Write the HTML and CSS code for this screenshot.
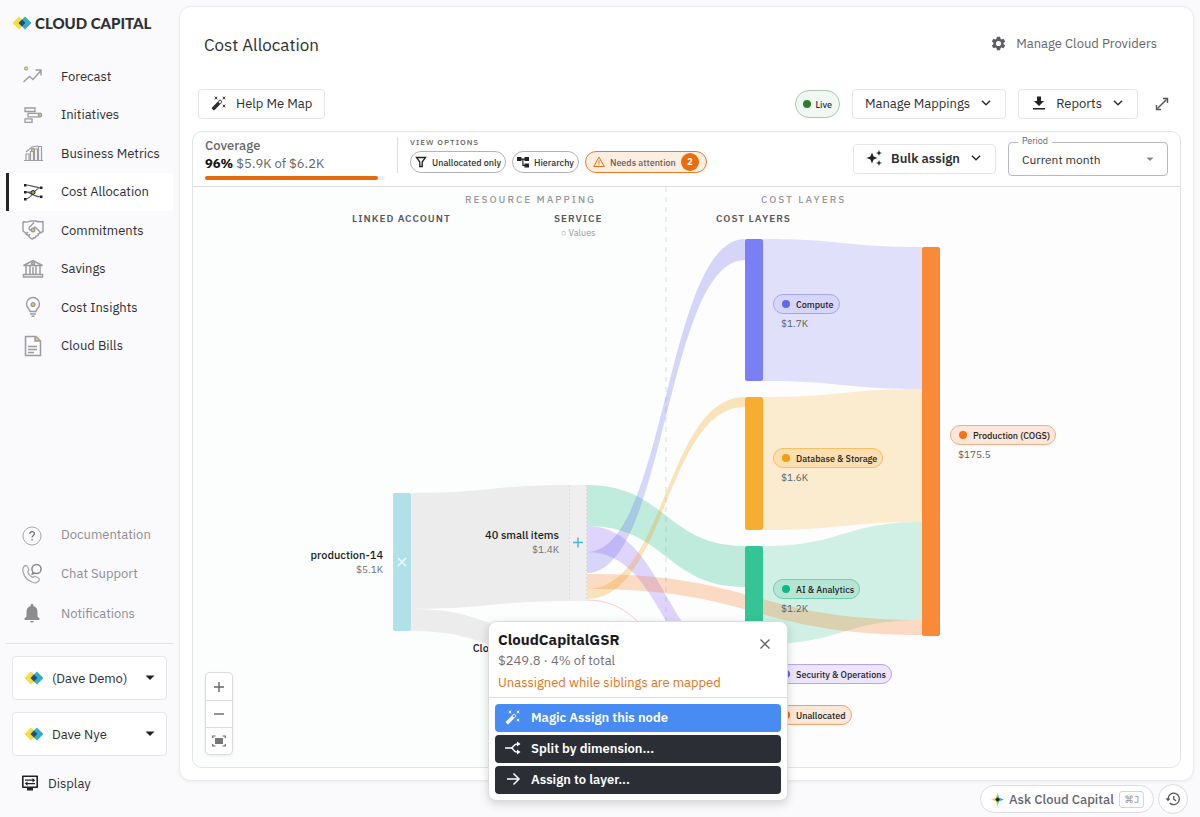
FILE: index.html
```
<!DOCTYPE html>
<html lang="en">
<head>
    <meta charset="UTF-8">
    <meta name="viewport" content="width=device-width, initial-scale=1.0">
    <title>Cost Allocation - Cloud Capital</title>
    <link rel="stylesheet" href="styles.css">
</head>
<body>
    <!-- shared shapes -->
    <svg class="defs" width="0" height="0" aria-hidden="true">
        <symbol id="logo" viewBox="0 0 20 14">
            <path d="M7 .5 13.500 7 7 13.500.5 7z" fill="#fbdc3a"/>
            <path d="M13 .5 19.500 7 13 13.500 6.500 7z" fill="#35adc6"/>
            <path d="M10 3.600 13.400 7 10 10.400 6.600 7z" fill="#1f4e79"/>
        </symbol>
        <symbol id="wand" viewBox="0 0 24 24">
            <path d="m7.500 5.600 2.500 1.400-1.400-2.500L10 2 7.500 3.400 5 2l1.400 2.500L5 7zm12 9.800L17 14l1.400 2.500L17 19l2.500-1.400L22 19l-1.400-2.500L22 14zM22 2l-2.500 1.400L17 2l1.400 2.500L17 7l2.500-1.400L22 7l-1.400-2.500zm-7.630 5.290a1 1 0 0 0-1.410 0L1.290 18.960a1 1 0 0 0 0 1.410l2.340 2.340c.39.39 1.020.39 1.410 0L16.700 11.050a1 1 0 0 0 0-1.410zm-1.030 5.490-2.120-2.120 2.440-2.440 2.120 2.120z" fill="currentColor"/>
        </symbol>
        <symbol id="chevron" viewBox="0 0 12 12">
            <path d="m2.500 4 3.500 3.500L9.500 4" fill="none" stroke="currentColor" stroke-width="1.300"/>
        </symbol>
    </svg>

    <aside class="sidebar">
        <a class="brand" href="#"><svg class="brand-logo"><use href="#logo"/></svg>CLOUD CAPITAL</a>

        <nav class="nav">
            <a href="#"><svg viewBox="0 0 22 22"><path d="m1.500 17 6-5.500 3.500 3L19 5.500M13.500 5H19v5.500" fill="none" stroke="#9b9ba0" stroke-width="1.400"/><circle cx="4" cy="3.500" r="1.600" fill="#e6d870" stroke="#9b9ba0"/></svg>Forecast</a>
            <a href="#"><svg viewBox="0 0 22 22" fill="none" stroke="#9b9ba0" stroke-width="1.300"><path d="M3 4h10v3.500H3zM6 9.300h12v3.500H6zM3 14.800h7v3.500H3z"/><circle cx="18" cy="11" r="1.700" fill="#d8ca55"/></svg>Initiatives</a>
            <a href="#"><svg viewBox="0 0 22 22" fill="none" stroke="#9b9ba0" stroke-width="1.200"><path d="M2 18.500h19M4 18v-6h3v6M8.500 18V9.500h3V18M12.500 18V7h3v11M16.500 18V4.500h3V18M4 10l6-5 6-1"/><circle cx="11" cy="8" r="1.600" fill="#e9cb45"/></svg>Business Metrics</a>
            <a href="#" class="active"><svg viewBox="0 0 22 22"><path d="M3 4c5 0 9 2 16 3M3 11c6 0 9 5 16 5M3 18c8 0 8-11 16-11M3 11c4 0 6 0 8 0" fill="none" stroke="#555" stroke-width="1.200"/><path d="M2 3h2.500v2.500H2zM2 10h2.500v2.500H2zM2 17h2.500v2.500H2zM18 5.500h2.500V8H18zM18 14.500h2.500V17H18z" fill="#222"/><circle cx="11" cy="11.500" r="2" fill="#a8a43a" stroke="#222"/></svg>Cost Allocation</a>
            <a href="#"><svg viewBox="0 0 22 22" fill="none" stroke="#9b9ba0" stroke-width="1.400" stroke-linejoin="round"><path d="M1 2.500c3 1 5 .8 7-.5h6c2 1 4 1 7 .5v10l-3 1.500M1 2.500V12l2 1.500 6 6c1 1 2.500.5 2.500-.8 1.500.8 2.800-.3 2.500-1.700 1.700.5 2.800-.8 2.200-2.200 1.600 0 2.200-1.500 1.200-2.500L13 8l-3 2.500c-2 1.200-3.800-.6-2.500-2.300L12 3.500M6 13l-2.500 2.500M8 15l-2 2.500"/><circle cx="11" cy="11" r="1.800" fill="#e9cb45"/></svg>Commitments</a>
            <a href="#"><svg viewBox="0 0 22 22" fill="none" stroke="#9b9ba0" stroke-width="1.500"><path d="M1.500 7.500 11 2.500l9.500 5zM4 8v8M8 8v8M14 8v8M18 8v8M11 9v7M1.500 16.500h19V19h-19z"/><circle cx="11" cy="5.500" r="1.500" fill="#e9cb45"/></svg>Savings</a>
            <a href="#"><svg viewBox="0 0 22 22" fill="none" stroke="#9b9ba0" stroke-width="1.400"><path d="M8 15.500c0-2-3.500-3.500-3.500-7.500a6.500 6.500 0 0 1 13 0c0 4-3.500 5.500-3.500 7.500zM8 18h6M9.500 20.300h3"/><circle cx="11" cy="8.500" r="1.900" fill="#e9cb45"/></svg>Cost Insights</a>
            <a href="#"><svg viewBox="0 0 22 22" fill="none" stroke="#9b9ba0" stroke-width="1.500"><path d="M3.500 1.500H14l4.500 4.500v14.500h-15zM6 11.500h9M6 14.500h9M6 17.500h6"/><path d="M13 1.500V6h5" fill="#e9cb45"/></svg>Cloud Bills</a>
        </nav>

        <nav class="nav nav-help">
            <a href="#"><svg viewBox="0 0 22 22" fill="none"><circle cx="10" cy="12" r="9" stroke="#a5a5aa"/><path d="M7.800 9.800c0-3 4.600-2.800 4.600-.2 0 1.800-2.300 1.900-2.300 4M10.100 15v1.500" stroke="#77777c" stroke-width="1.300"/></svg>Documentation</a>
            <a href="#"><svg viewBox="0 0 22 22" fill="none" stroke="#aaaaaf" stroke-width="1.300"><path d="M2 3.500c1.500-1.700 3-1 3.700.5l1 2.300c.4 1-.6 1.900-1 2.600.8 2.500 2.500 4.400 4.900 5.500.8-.6 1.600-1.500 2.800-.9l3 1.500c1.300.8 1.300 2-.2 3.500-1.500 1.400-3.200 1.700-5.200 1C5.500 17.500 2 13.500.9 8.500.6 6.500.8 5 2 3.500z"/><circle cx="14.500" cy="6" r="4.600" stroke="#88888d" stroke-width="1.500"/><path d="m11 9-.8 2.200 2.500-.8" stroke="#88888d"/></svg>Chat Support</a>
            <a href="#"><svg viewBox="0 0 22 22"><path d="M10 20.500a2 2 0 0 0 2-1.500H8a2 2 0 0 0 2 1.500zm5.500-6V10c0-3-1.500-5.200-4.200-5.900V3a1.300 1.300 0 0 0-2.600 0v1.100C6 4.800 4.500 7 4.500 10v4.500L2.500 16.500V18h15v-1.500z" fill="#8c8c90"/></svg>Notifications</a>
        </nav>

        <div class="accounts">
            <label class="account">
                <svg class="account-logo"><use href="#logo"/></svg>
                <select aria-label="Organization"><option>(Dave Demo)</option></select>
                <svg class="caret" viewBox="0 0 10 6"><path d="M.5.5h9L5 5z"/></svg>
            </label>
            <label class="account">
                <svg class="account-logo"><use href="#logo"/></svg>
                <select aria-label="User"><option>Dave Nye</option></select>
                <svg class="caret" viewBox="0 0 10 6"><path d="M.5.5h9L5 5z"/></svg>
            </label>
        </div>

        <button class="display-button">
            <svg viewBox="0 0 18 18"><path d="M1.800 2.300h14.400v11H1.800z" fill="none" stroke="#222" stroke-width="1.600" stroke-linejoin="round"/><path d="M6 14h6v2.500H6z" fill="#222"/><path d="M4 6.200h8M6 9.600h8" stroke="#222" stroke-width="1.200"/><path d="m11.500 4 2.700 2.200-2.700 2.200zM6.500 7.400 3.800 9.600l2.700 2.200z" fill="#222"/></svg>
            Display
        </button>
    </aside>

    <div class="page">
        <main class="card">
            <header class="page-header">
                <h1>Cost Allocation</h1>
                <a class="providers" href="#">
                    <svg viewBox="0 0 24 24"><path d="M19.140 12.940c.04-.3.060-.61.060-.94s-.02-.64-.07-.94l2.030-1.580a.49.49 0 0 0 .12-.61l-1.920-3.320a.49.49 0 0 0-.59-.22l-2.390.96a7 7 0 0 0-1.620-.94l-.36-2.540a.48.48 0 0 0-.48-.41h-3.840a.48.48 0 0 0-.47.41l-.36 2.540a7 7 0 0 0-1.620.94l-2.390-.96a.48.48 0 0 0-.59.22L2.740 8.870a.47.47 0 0 0 .12.61l2.030 1.580a6 6 0 0 0 0 1.880l-2.030 1.580a.49.49 0 0 0-.12.61l1.920 3.320c.12.22.37.29.59.22l2.390-.96c.5.38 1.030.7 1.620.94l.36 2.540c.05.24.24.41.48.41h3.840c.24 0 .44-.17.47-.41l.36-2.540a7 7 0 0 0 1.620-.94l2.390.96c.22.08.47 0 .59-.22l1.920-3.320a.47.47 0 0 0-.12-.61zM12 15.600a3.600 3.600 0 1 1 0-7.200 3.600 3.600 0 0 1 0 7.200z" fill="#5f5f63"/></svg>
                    Manage Cloud Providers
                </a>
            </header>

            <div class="toolbar">
                <button class="button"><svg class="icon"><use href="#wand"/></svg>Help Me Map</button>
                <span class="live"><i></i>Live</span>
                <button class="button">Manage Mappings<svg class="chevron"><use href="#chevron"/></svg></button>
                <button class="button"><svg class="icon" viewBox="0 0 16 16"><path d="M6 1.500h4V6h3l-5 5-5-5h3zM2 13h12v1.600H2z" fill="#222"/></svg>Reports<svg class="chevron"><use href="#chevron"/></svg></button>
                <button class="expand" aria-label="Full screen"><svg viewBox="0 0 14 14"><path d="M2.500 11.500 11.500 2.500" stroke="#555" stroke-width="1.400"/><path d="M8 1.500h4.500V6M1.500 8v4.500H6" fill="none" stroke="#555" stroke-width="1.400"/></svg></button>
            </div>

            <section class="panel">
                <div class="panel-header">
                    <div class="coverage">
                        <h2>Coverage</h2>
                        <p><strong>96%</strong> $5.9K of $6.2K</p>
                        <div class="bar"><div class="bar-fill" style="width: 96%"></div></div>
                    </div>
                    <div class="view-options">
                        <h3>VIEW OPTIONS</h3>
                        <div class="chips">
                            <button class="chip"><svg viewBox="0 0 12 12"><path d="M1.500 1.500h9L7.200 6v4.500H4.800V6z" fill="none" stroke="#222" stroke-width="1.300"/></svg>Unallocated only</button>
                            <button class="chip"><svg viewBox="0 0 12 12"><path d="M0 1h4.500v4H0zM7.500 1H12v4H7.500zM7.500 7.500H12v4H7.500zM4 2.500h4v1.200H6.500v5H8V10H5.300V3.700H4z" fill="#222"/></svg>Hierarchy</button>
                            <button class="chip chip-warning"><svg viewBox="0 0 12 12"><path d="M6 1.200 11.300 10.500H.7zM6 4.500v3M6 8.200v1" fill="none" stroke="#ea6c0a"/></svg>Needs attention<b>2</b></button>
                        </div>
                    </div>
                    <button class="button bulk"><svg class="icon" viewBox="0 0 16 16"><path d="M6 2.500 7.600 6.400 11.500 8 7.600 9.600 6 13.500 4.400 9.600.5 8l3.900-1.600zM13 0l.8 2.200L16 3l-2.200.8L13 6l-.8-2.200L10 3l2.200-.8zM13 10l.8 2.200 2.200.8-2.200.8L13 16l-.8-2.200L10 13l2.200-.8z" fill="#222"/></svg>Bulk assign<svg class="chevron"><use href="#chevron"/></svg></button>
                    <div class="period">
                        <label for="period">Period</label>
                        <select id="period"><option>Current month</option></select>
                        <svg class="caret" viewBox="0 0 10 6"><path d="M.5.5h9L5 5z"/></svg>
                    </div>
                </div>

                <div class="canvas">
                    <div class="stage">
                        <svg class="sankey" viewBox="0 0 987 580">
                            <path d="M473 0V580" stroke="#ececee" stroke-width="2" stroke-dasharray="5 5"/>
                            <g fill="#ebeceb">
                                <path d="M218 306C297 306 297 298 376 298V414C297 414 297 422 218 422z"/>
                                <path d="M218 422C297 422 297 450 376 450V472C297 472 297 444 218 444z"/>
                            </g>
                            <!-- service to cost layer -->
                            <path d="M394 298C473 298 473 359 552 359V400C473 400 473 339 394 339z" fill="#10b981" fill-opacity=".26"/>
                            <path d="M394 339C473 339 473 477 552 477V503C473 503 473 365 394 365z" fill="#8b5cf6" fill-opacity=".26"/>
                            <path d="M394 365C473 365 473 52 552 52V73C473 73 473 386 394 386z" fill="#6366f1" fill-opacity=".26"/>
                            <path d="M394 402C473 402 473 210 552 210V220C473 220 473 412 394 412z" fill="#f59e0b" fill-opacity=".28"/>
                            <path d="M394 413C473 413 473 528 552 528" fill="none" stroke="#f9cdd2"/>
                            <!-- cost layer to production -->
                            <path d="M570 52C650 52 650 60 729 60V202C650 202 650 194 570 194z" fill="#6366f1" fill-opacity=".19"/>
                            <path d="M570 210C650 210 650 202 729 202V335C650 335 650 343 570 343z" fill="#f59e0b" fill-opacity=".19"/>
                            <path d="M570 359C650 359 650 335 729 335V433C650 433 650 457 570 457z" fill="#10b981" fill-opacity=".19"/>
                            <path d="M394 387C562 387 562 433 729 433V448C562 448 562 402 394 402z" fill="#f97316" fill-opacity=".25"/>
                            <!-- nodes -->
                            <rect x="200" y="306" width="18" height="138" rx="2" fill="#b0e0e9"/>
                            <rect x="376" y="298" width="18" height="116" fill="#efefef"/>
                            <path d="M376.500 298V414M393.500 298V414" stroke="#dcdcde" stroke-dasharray="2 2"/>
                            <rect x="552" y="52" width="18" height="142" rx="2" fill="#7b7ff5"/>
                            <rect x="552" y="210" width="18" height="133" rx="2" fill="#f7ae30"/>
                            <rect x="552" y="359" width="18" height="98" rx="2" fill="#34c496"/>
                            <rect x="729" y="60" width="18" height="389" rx="2" fill="#fb8a37"/>
                            <path d="m205 371 8 8m0-8-8 8" stroke="#eef9fb" stroke-width="1.500"/>
                            <path d="M380 355.500h10M385 350.500v10" stroke="#4ab4c8" stroke-width="1.400"/>
                        </svg>

                        <span class="group group-resource">RESOURCE MAPPING</span>
                        <span class="group group-layers">COST LAYERS</span>
                        <span class="column column-account">LINKED ACCOUNT</span>
                        <span class="column column-service">SERVICE<small>○ Values</small></span>
                        <span class="column column-layers">COST LAYERS</span>

                        <div class="item item-production">production-14<small>$5.1K</small></div>
                        <div class="item item-small">40 small items<small>$1.4K</small></div>
                        <div class="item item-gsr">CloudCapitalGSR</div>

                        <div class="layer layer-compute"><span>Compute</span><small>$1.7K</small></div>
                        <div class="layer layer-database"><span>Database &amp; Storage</span><small>$1.6K</small></div>
                        <div class="layer layer-ai"><span>AI &amp; Analytics</span><small>$1.2K</small></div>
                        <div class="layer layer-security"><span>Security &amp; Operations</span></div>
                        <div class="layer layer-unallocated"><span>Unallocated</span></div>
                        <div class="layer layer-cogs"><span>Production (COGS)</span><small>$175.5</small></div>

                        <div class="popup" role="dialog" aria-labelledby="popup-title">
                            <div class="popup-header">
                                <div>
                                    <h4 id="popup-title">CloudCapitalGSR</h4>
                                    <p>$249.8 · 4% of total</p>
                                    <p class="warning">Unassigned while siblings are mapped</p>
                                </div>
                                <button class="close" aria-label="Close"><svg viewBox="0 0 12 12"><path d="m1.500 1.500 9 9m0-9-9 9" stroke="#666" stroke-width="1.400"/></svg></button>
                            </div>
                            <div class="popup-actions">
                                <button class="primary"><svg><use href="#wand"/></svg>Magic Assign this node</button>
                                <button><svg viewBox="0 0 16 16" fill="none" stroke="#fff" stroke-width="1.400"><path d="M0 8h6c3 0 2-4 6-4h2M6 8c3 0 2 4 6 4h2"/><path d="M12 1.500 15.500 4 12 6.500zM12 9.500l3.500 2.500-3.500 2.500z" fill="#fff" stroke="none"/></svg>Split by dimension...</button>
                                <button><svg viewBox="0 0 16 16"><path d="M2 8h12M8.500 2.500 14 8l-5.500 5.500" fill="none" stroke="#fff" stroke-width="1.500"/></svg>Assign to layer...</button>
                            </div>
                        </div>
                    </div>

                    <div class="zoom">
                        <button aria-label="Zoom in"><svg viewBox="0 0 14 14"><path d="M2 7h10M7 2v10" stroke="#666" stroke-width="1.400"/></svg></button>
                        <button aria-label="Zoom out"><svg viewBox="0 0 14 14"><path d="M2 7h10" stroke="#666" stroke-width="1.400"/></svg></button>
                        <button aria-label="Fit to screen"><svg viewBox="0 0 14 14"><path d="M3 4h8v6H3z" fill="#777"/><path d="M.7 4V2h2.800M10.500 2h2.800v2M13.300 10v2h-2.800M3.500 12H.7v-2" fill="none" stroke="#666" stroke-width="1.200"/></svg></button>
                    </div>
                </div>
            </section>
        </main>

        <footer class="assistant">
            <button class="ask">
                <svg viewBox="0 0 14 14"><path d="M7 0v14L5.200 8.800 0 7l5.200-1.800z" fill="#f7d433"/><path d="M7 0v14l1.800-5.200L14 7 8.800 5.200z" fill="#2fb0d0"/><path d="m7 4.500 2.500 2.500L7 9.500 4.500 7z" fill="#222"/></svg>
                Ask Cloud Capital
                <kbd>⌘J</kbd>
            </button>
            <button class="history" aria-label="History"><svg viewBox="0 0 16 16" fill="none" stroke="#555" stroke-width="1.300"><path d="M3 8a5.700 5.700 0 1 1 1.700 4M8.800 5v3.300l2.300 1.500"/><path d="M.5 7.500h5L3 10.300z" fill="#555" stroke="none"/></svg></button>
        </footer>
    </div>
</body>
</html>
```
FILE: styles.css
```
* {
    box-sizing: border-box;
}

body {
    margin: 0;
    height: 100vh;
    display: flex;
    background: #faf9fc;
    color: #2d2f33;
    font-family: "IBM Plex Sans", Roboto, sans-serif;
    font-size: 13px;
    overflow: hidden;
}

h1, h2, h3, h4, p {
    margin: 0;
}

a {
    color: inherit;
    text-decoration: none;
}

button, select {
    font: inherit;
    color: inherit;
    border: none;
    background: none;
    padding: 0;
    cursor: pointer;
}

select {
    appearance: none;
    flex: 1;
    min-width: 0;
}

svg {
    display: block;
    flex: none;
}

.defs {
    position: absolute;
}

/* sidebar */
.sidebar {
    width: 179px;
    flex: none;
    display: flex;
    flex-direction: column;
    padding: 12px 6px 25px;
}

.brand {
    display: flex;
    align-items: center;
    gap: 3px;
    height: 21px;
    padding-left: 6px;
    font-family: Lato, sans-serif;
    font-size: 15px;
    font-weight: 900;
    white-space: nowrap;
}

.brand-logo {
    width: 20px;
    height: 14px;
}

.nav {
    display: grid;
    grid-auto-rows: 1fr;
    height: 308px;
    margin-top: 24px;
}

.nav a {
    display: flex;
    align-items: center;
    gap: 17px;
    padding-left: 16px;
}

.nav svg {
    width: 22px;
    height: 22px;
}

.nav .active {
    background: #fff;
    border-left: 3px solid #222;
    padding-left: 13px;
}

.nav-help {
    height: 118px;
    margin-top: auto;
    color: #8e8e93;
}

.accounts {
    display: flex;
    flex-direction: column;
    gap: 12px;
    margin-top: 10px;
    padding: 12px 6px 0;
    border-top: 1px solid #e4e4e8;
}

.account {
    display: flex;
    align-items: center;
    gap: 8px;
    height: 44px;
    padding: 0 11px;
    background: #fff;
    border: 1px solid #e6e6ea;
    border-radius: 4px;
}

.account-logo {
    width: 20px;
    height: 14px;
}

.caret {
    width: 10px;
    height: 6px;
    fill: #222;
}

.display-button {
    display: flex;
    align-items: center;
    gap: 9px;
    margin: 18px 0 0 15px;
}

.display-button svg {
    width: 18px;
    height: 18px;
}

/* page */
.page {
    flex: 1;
    min-width: 0;
    display: flex;
    flex-direction: column;
    padding: 6px 6px 0 0;
}

.card {
    flex: 1;
    min-height: 0;
    display: flex;
    flex-direction: column;
    padding: 0 12px 12px;
    background: #fff;
    border: 1px solid #ececf0;
    border-radius: 12px;
    box-shadow: 0 1px 3px rgba(0, 0, 0, 0.06);
}

.page-header {
    display: flex;
    align-items: center;
    justify-content: space-between;
    height: 76px;
    padding: 0 24px 0 12px;
}

.page-header h1 {
    font-size: 17px;
    font-weight: 400;
}

.providers {
    display: flex;
    align-items: center;
    gap: 9px;
    padding-bottom: 3px;
    color: #66666a;
}

.providers svg {
    width: 17px;
    height: 17px;
}

.toolbar {
    display: flex;
    align-items: center;
    gap: 12px;
    height: 42px;
    padding: 0 12px 0 6px;
    margin-bottom: 6px;
}

.button {
    display: flex;
    align-items: center;
    gap: 9px;
    height: 30px;
    padding: 0 12px 2px;
    background: #fff;
    border: 1px solid #e6e6ea;
    border-radius: 4px;
    white-space: nowrap;
}

.icon {
    width: 16px;
    height: 16px;
}

.chevron {
    width: 14px;
    height: 14px;
}

.live {
    display: flex;
    align-items: center;
    gap: 4px;
    height: 28px;
    padding: 0 7px;
    margin-left: auto;
    background: #f1f7f2;
    border: 1px solid #a5c9a8;
    border-radius: 14px;
    font-size: 9px;
    font-weight: 500;
}

.live i {
    width: 8px;
    height: 8px;
    border-radius: 50%;
    background: #2a8030;
}

.expand {
    margin-left: 5px;
}

.expand svg {
    width: 14px;
    height: 14px;
}

/* panel */
.panel {
    flex: 1;
    min-height: 0;
    display: flex;
    flex-direction: column;
    border: 1px solid #e4e4e8;
    border-radius: 10px;
}

.panel-header {
    display: flex;
    align-items: center;
    height: 55px;
    padding: 0 12px;
    border-bottom: 1px solid #dedee2;
}

.coverage {
    width: 192px;
    padding: 0 12px 2px 0;
    color: #666;
    line-height: 18px;
}

.coverage h2 {
    font-size: 13px;
    font-weight: 500;
}

.coverage strong {
    color: #111;
}

.bar {
    height: 4px;
    margin-top: 3px;
    background: #e3f2fa;
    border-radius: 2px;
}

.bar-fill {
    height: 4px;
    background: #e56a0a;
    border-radius: 2px;
}

.view-options {
    align-self: flex-start;
    margin: 5px auto 0 0;
    padding-left: 12px;
    border-left: 1px solid #dedee2;
}

.view-options h3 {
    margin-bottom: 4px;
    color: #666;
    font-size: 8px;
    font-weight: 500;
    letter-spacing: 1px;
    line-height: 10px;
}

.chips {
    display: flex;
    gap: 6px;
}

.chip {
    display: flex;
    align-items: center;
    gap: 5px;
    height: 22px;
    padding: 0 4px;
    border: 1px solid #b5b5b9;
    border-radius: 11px;
    font-size: 9px;
    font-weight: 500;
    white-space: nowrap;
}

.chip svg {
    width: 12px;
    height: 12px;
}

.chip-warning {
    padding: 0 7px;
    background: #fdeee2;
    border-color: #ea7a24;
    color: #6b5c52;
}

.chip b {
    width: 18px;
    height: 18px;
    border-radius: 50%;
    background: #ea6c0a;
    color: #fff;
    line-height: 18px;
}

.bulk {
    margin-right: 12px;
    font-weight: 600;
}

.period {
    position: relative;
    display: flex;
    align-items: center;
    width: 160px;
    height: 34px;
    padding: 0 13px;
    border: 1px solid #b9b9bd;
    border-radius: 4px;
    font-size: 12px;
}

.period label {
    position: absolute;
    top: -8px;
    left: 9px;
    padding: 0 4px;
    background: #fff;
    color: #66666a;
    font-size: 9px;
}

.period .caret {
    width: 8px;
    height: 5px;
    fill: #88888c;
}

/* diagram */
.canvas {
    position: relative;
    flex: 1;
    min-height: 0;
    background: linear-gradient(90deg, #fcfefd 473px, #fdfdfd 473px);
    border-radius: 0 0 10px 10px;
}

.stage {
    position: relative;
    width: 987px;
}

.sankey {
    width: 987px;
    height: 580px;
}

.group, .column, .item, .layer {
    position: absolute;
    white-space: nowrap;
}

.group {
    top: 7px;
    color: #98989c;
    font-size: 10px;
    font-weight: 500;
    letter-spacing: 2px;
    line-height: 12px;
}

.group-resource {
    left: 272px;
}

.group-layers {
    left: 568px;
}

.column {
    top: 26px;
    color: #58585c;
    font-size: 10px;
    font-weight: 600;
    letter-spacing: 1px;
    line-height: 12px;
    text-align: center;
}

.column small {
    display: block;
    margin-top: 2px;
    color: #98989c;
    font-size: 9px;
    font-weight: 400;
    letter-spacing: 0;
}

.column-account {
    left: 159px;
}

.column-service {
    left: 361px;
}

.column-layers {
    left: 523px;
}

.item {
    color: #1c1c1f;
    font-size: 11px;
    font-weight: 500;
    line-height: 15px;
    text-align: right;
}

.item small {
    display: block;
    color: #707074;
    font-size: 10px;
    font-weight: 400;
    line-height: 14px;
}

.item-production {
    top: 361px;
    right: 797px;
}

.item-small {
    top: 341px;
    right: 621px;
}

.item-gsr {
    top: 454px;
    right: 621px;
}

.layer {
    left: 580px;
}

.layer span {
    display: flex;
    align-items: center;
    gap: 6px;
    height: 20px;
    padding: 0 5px 0 8px;
    background: #d5d6fa;
    border: 1px solid #a3a5f6;
    border-radius: 10px;
    color: #222;
    font-size: 9px;
    font-weight: 500;
}

.layer span::before {
    content: "";
    width: 8px;
    height: 8px;
    border-radius: 50%;
    background: #6366f1;
}

.layer small {
    display: block;
    padding: 3px 0 0 8px;
    color: #606064;
    font-size: 10px;
    line-height: 14px;
}

.layer-compute {
    top: 107px;
}

.layer-database {
    top: 261px;
}

.layer-database span {
    background: #fbdfb0;
    border-color: #f5bf62;
}

.layer-database span::before {
    background: #f59e0b;
}

.layer-ai {
    top: 392px;
}

.layer-ai span {
    background: #b5e6d5;
    border-color: #6dcfab;
}

.layer-ai span::before {
    background: #10b981;
}

.layer-security {
    top: 477px;
}

.layer-security span {
    background: #ece5fc;
    border-color: #b9a2ee;
}

.layer-security span::before {
    background: #7c4ff0;
}

.layer-unallocated {
    top: 518px;
}

.layer-unallocated span {
    background: #fce8d9;
    border-color: #f0a064;
}

.layer-unallocated span::before {
    background: #ea6c0a;
}

.layer-cogs {
    top: 238px;
    left: 757px;
}

.layer-cogs span {
    background: #fde7db;
    border-color: #f5ab86;
}

.layer-cogs span::before {
    background: #f97316;
}

.popup {
    position: absolute;
    top: 434px;
    left: 295px;
    z-index: 2;
    width: 300px;
    background: #fff;
    border: 1px solid #dcdce0;
    border-radius: 8px;
    box-shadow: 0 3px 10px rgba(0, 0, 0, 0.16);
}

.popup-header {
    display: flex;
    align-items: flex-start;
    justify-content: space-between;
    padding: 7px 16px 3px 9px;
    border-bottom: 1px solid #dcdce0;
    color: #707074;
    line-height: 22px;
}

.popup-header h4 {
    color: #1c1c1f;
    font-size: 15px;
    line-height: 21px;
}

.popup-header .warning {
    color: #dd7420;
}

.close {
    margin-top: 9px;
}

.close svg {
    width: 12px;
    height: 12px;
}

.popup-actions {
    display: grid;
    gap: 3px;
    padding: 6px;
}

.popup-actions button {
    display: flex;
    align-items: center;
    gap: 10px;
    height: 28px;
    padding: 0 10px 2px;
    background: #2b2e35;
    border-radius: 4px;
    color: #fff;
    font-weight: 600;
}

.popup-actions .primary {
    background: #488bf2;
}

.popup-actions svg {
    width: 16px;
    height: 16px;
}

.zoom {
    position: absolute;
    left: 12px;
    bottom: 12px;
    width: 28px;
    background: #fff;
    border: 1px solid #dcdce0;
    border-radius: 5px;
    box-shadow: 0 1px 3px rgba(0, 0, 0, 0.08);
}

.zoom button {
    display: grid;
    place-items: center;
    width: 100%;
    height: 27px;
}

.zoom button + button {
    border-top: 1px solid #dcdce0;
}

.zoom svg {
    width: 14px;
    height: 14px;
}

/* assistant */
.assistant {
    display: flex;
    align-items: center;
    justify-content: flex-end;
    gap: 4px;
    height: 36px;
    padding-right: 6px;
}

.ask {
    display: flex;
    align-items: center;
    gap: 5px;
    height: 28px;
    padding: 0 9px 0 10px;
    background: #fff;
    border: 1px solid #dcdce0;
    border-radius: 14px;
    color: #66666a;
    font-weight: 500;
}

.ask svg {
    width: 13px;
    height: 13px;
}

.ask kbd {
    padding: 1px 4px;
    border: 1px solid #d6d6da;
    border-radius: 3px;
    color: #98989c;
    font-family: inherit;
    font-size: 10px;
    font-weight: 400;
}

.history {
    display: grid;
    place-items: center;
    width: 30px;
    height: 30px;
    background: #fff;
    border: 1px solid #dcdce0;
    border-radius: 50%;
}

.history svg {
    width: 16px;
    height: 16px;
}
```
